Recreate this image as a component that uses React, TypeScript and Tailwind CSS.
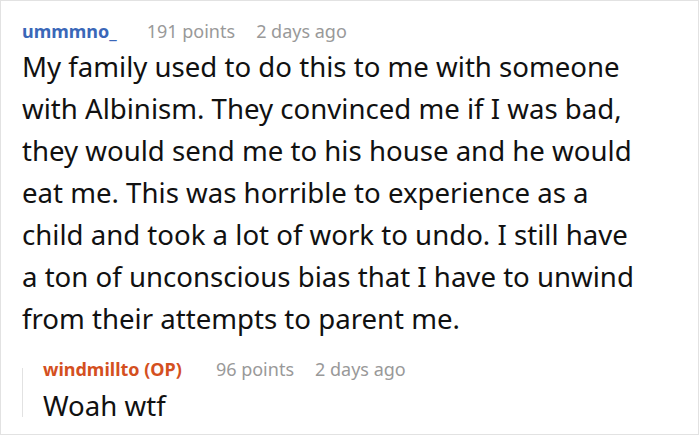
function Meta({ name, color, points, time, gap = 'ml-[30px]' }: { name: string; color: string; points: string; time: string; gap?: string }) {
  return (
    <div className="flex items-baseline text-[18px] leading-[24px]">
      <span className={`font-bold ${color}`}>{name}</span>
      <span className={`${gap} text-[#999]`}>{points}</span>
      <span className="ml-[21px] text-[#999]">{time}</span>
    </div>
  )
}

export default function App() {
  return (
    <div className="h-[436px] w-[700px] bg-white font-['Noto_Sans',sans-serif]">
      <div className="h-[435px] w-[699px] border border-[#e2e2e2] pl-[21px] pt-[18px] text-[#111]">
        <Meta name="ummmno_" color="text-[#3a67b8]" points="191 points" time="2 days ago" />
        <p className="mt-[2px] pr-[50px] text-[27.6px] leading-[42px]">
          My family used to do this to me with someone with Albinism. They convinced me if I was bad, they would send me to his house and he would eat me. This was horrible to experience as a child and took a lot of work to undo. I still have a ton of unconscious bias that I have to unwind from their attempts to parent me.
        </p>
        <div className="mt-[18px] flex">
          <div className="mb-[8px] mt-[11px] w-px bg-[#e2e2e2]" />
          <div className="pl-[20px]">
            <Meta name="windmillto (OP)" color="text-[#d4501f]" points="96 points" time="2 days ago" gap="ml-[34px]" />
            <p className="mt-[4px] text-[27.6px] leading-[40px]">Woah wtf</p>
          </div>
        </div>
      </div>
    </div>
  )
}
